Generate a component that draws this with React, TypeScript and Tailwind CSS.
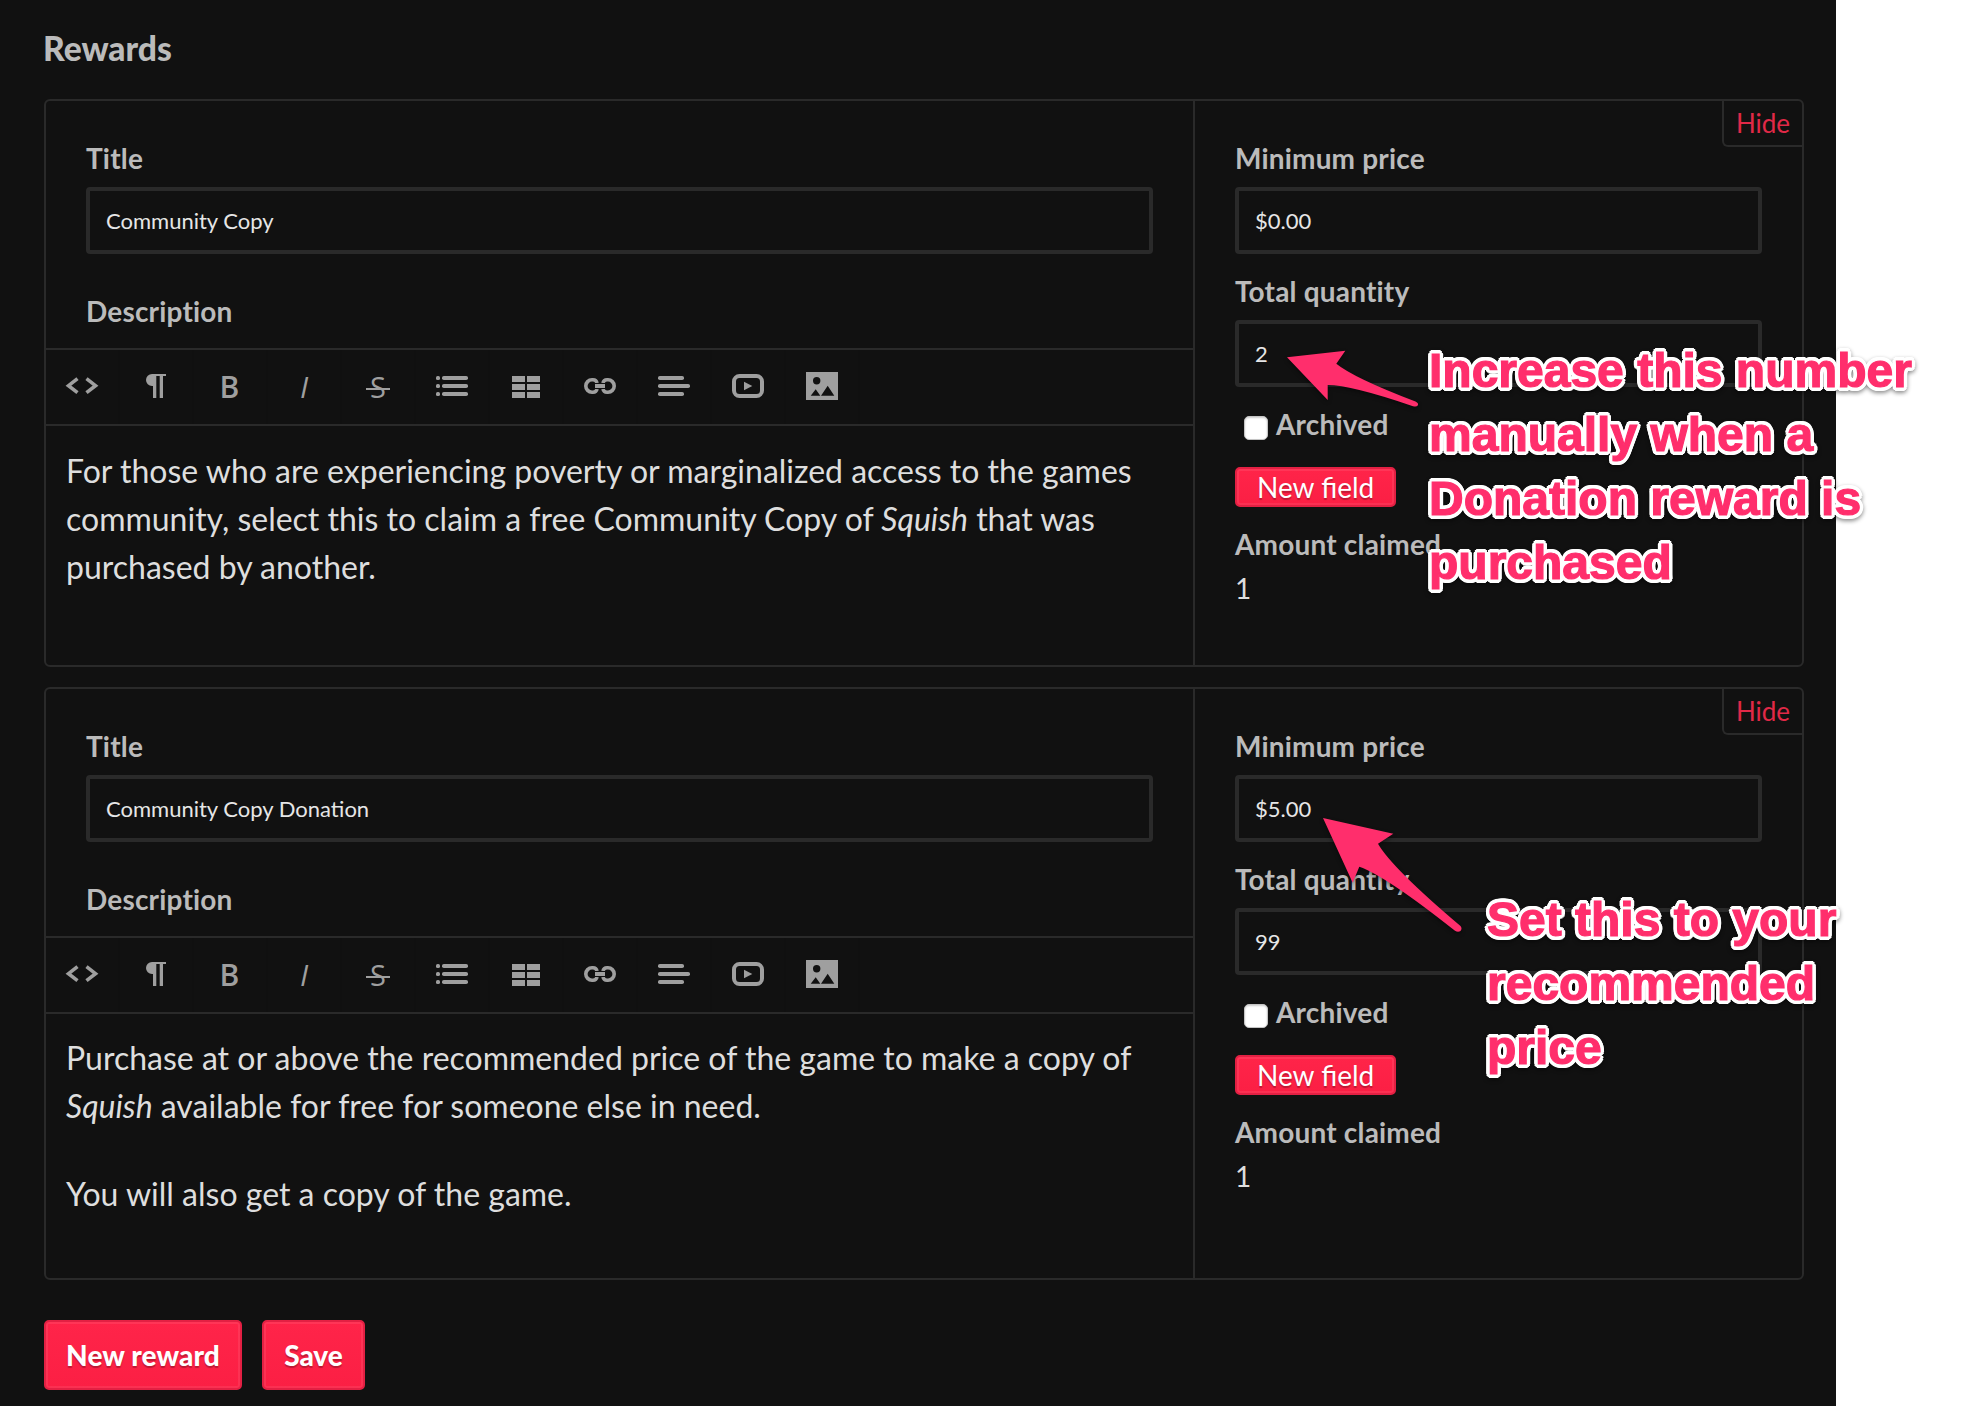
import type { ReactNode } from "react";

type Reward = {
	title: string;
	price: string;
	quantity: string;
	claimed: number;
	description: ReactNode;
};

const rewards: Reward[] = [
	{
		title: "Community Copy",
		price: "$0.00",
		quantity: "2",
		claimed: 1,
		description: (
			<p>
				For those who are experiencing poverty or marginalized access to the games community, select
				this to claim a free Community Copy of <em>Squish</em> that was purchased by another.
			</p>
		),
	},
	{
		title: "Community Copy Donation",
		price: "$5.00",
		quantity: "99",
		claimed: 1,
		description: (
			<>
				<p>
					Purchase at or above the recommended price of the game to make a copy of <em>Squish</em>{" "}
					available for free for someone else in need.
				</p>
				<p>You will also get a copy of the game.</p>
			</>
		),
	},
];

const tools: { name: string; icon: ReactNode }[] = [
	{
		name: "HTML",
		icon: (
			<g fill="none" stroke="currentColor" strokeWidth="3.6">
				<path d="M-4.5 -8.3 L-13.5 -1.3 L-4.5 5.7" />
				<path d="M4.5 -8.3 L13.5 -1.3 L4.5 5.7" />
			</g>
		),
	},
	{
		name: "Paragraph",
		icon: <path d="M10 -13 H-4 a6 6 0 0 0 0 12 H-3 V11 H0.3 V-11 H3.7 V11 H7 V-11 H10 z" />,
	},
	{
		name: "Bold",
		icon: (
			<text x="-0.5" y="11" textAnchor="middle" className="font-['Open_Sans',sans-serif] text-[30px] font-semibold">
				B
			</text>
		),
	},
	{
		name: "Italic",
		icon: (
			<text x="0" y="11" textAnchor="middle" className="font-['Open_Sans',sans-serif] text-[30px] font-medium italic">
				I
			</text>
		),
	},
	{
		name: "Strikethrough",
		icon: (
			<>
				<text x="0" y="11" textAnchor="middle" className="font-['Open_Sans',sans-serif] text-[29px]">
					S
				</text>
				<rect x="-12" y="1" width="24" height="2" />
			</>
		),
	},
	{
		name: "List",
		icon: (
			<>
				{[-11, -3, 5].map((y) => (
					<g key={y}>
						<rect x="-16" y={y} width="4" height="4" rx="1.6" />
						<rect x="-10" y={y} width="26" height="4" rx="1.8" />
					</g>
				))}
			</>
		),
	},
	{
		name: "Table",
		icon: (
			<>
				{[-11, -3, 5].map((y) => (
					<g key={y}>
						<rect x="-14" y={y} width="13" height="6" />
						<rect x="1" y={y} width="13" height="6" />
					</g>
				))}
			</>
		),
	},
	{
		name: "Link",
		icon: (
			<>
				<g fill="none" stroke="currentColor" strokeWidth="3.6">
					<path d="M-3 -4 Q-3.6 -7.2 -7 -7.2 H-8 A6.2 6.2 0 0 0 -8 5.2 H-7 Q-3.6 5.2 -3 2" />
					<path d="M3 -4 Q3.6 -7.2 7 -7.2 H8 A6.2 6.2 0 0 1 8 5.2 H7 Q3.6 5.2 3 2" />
				</g>
				<rect x="-6" y="-4" width="12" height="6" className="fill-[#111]" />
				<rect x="-5" y="-3" width="10" height="4" />
			</>
		),
	},
	{
		name: "Align",
		icon: (
			<>
				<rect x="-16" y="-11" width="26" height="4" rx="1.8" />
				<rect x="-16" y="-3" width="32" height="4" rx="1.8" />
				<rect x="-16" y="5" width="26" height="4" rx="1.8" />
			</>
		),
	},
	{
		name: "Video",
		icon: (
			<>
				<rect x="-14" y="-11" width="28" height="20" rx="5.5" fill="none" stroke="currentColor" strokeWidth="4" />
				<path d="M-4 -5.3 L4.3 -1 L-4 3.3 z" />
			</>
		),
	},
	{
		name: "Image",
		icon: (
			<path
				fillRule="evenodd"
				d="M-16 -15 H16 V13 H-16 z M-5.3 -10 a3.7 3.7 0 1 0 0 7.4 a3.7 3.7 0 1 0 0 -7.4 z M-11.3 8.7 L-6.3 2.3 L-1.7 8.7 z M-1 8.7 L5.7 -1.3 L12.3 8.7 z"
			/>
		),
	},
];

function Toolbar() {
	return (
		<div className="flex h-[78px] border-y-2 border-[#2a2a2a] text-[#9f9f9f]">
			{tools.map(({ name, icon }) => (
				<button
					key={name}
					type="button"
					aria-label={name}
					className="flex w-[74px] items-center justify-center border-r-2 border-[#101010]"
				>
					<svg viewBox="-18 -18 36 36" className="size-9 overflow-visible" fill="currentColor">
						{icon}
					</svg>
				</button>
			))}
		</div>
	);
}

function Label({ children }: { children: ReactNode }) {
	return <div className="text-[28px] leading-10 font-bold tracking-[0.18px] text-[#bbb]">{children}</div>;
}

function Field({ label, value }: { label: string; value: string }) {
	return (
		<label className="block">
			<Label>{label}</Label>
			<input
				type="text"
				defaultValue={value}
				className="mt-[9px] block h-[67px] w-full rounded-[4px] border-4 border-[#2a2a2a] bg-transparent px-4 text-[22px] text-[#e6e6e6] outline-none"
			/>
		</label>
	);
}

const buttonStyle =
	"rounded-[5px] border-2 border-[#e32043] bg-linear-to-b from-[#ff2449] to-[#fb1f44] text-[28px] text-white shadow-[inset_0_0_0_2px_rgba(255,255,255,0.08)] text-shadow-[0_2px_1px_rgba(0,0,0,0.25)]";

function RewardCard({ reward }: { reward: Reward }) {
	return (
		<section className="group relative flex min-h-[568px] rounded-[6px] border-2 border-[#2a2a2a]">
			<div className="w-[1149px] border-r-2 border-[#2a2a2a]">
				<div className="px-10 pt-[37px] pb-[17px]">
					<Field label="Title" value={reward.title} />
					<div className="mt-[37px]">
						<Label>Description</Label>
					</div>
				</div>
				<Toolbar />
				<div className="p-5 text-[32px] leading-[48px] text-[#dedede] group-first:pt-[21px] group-first:pb-0 [&>p]:mb-10">
					{reward.description}
				</div>
			</div>
			<div className="flex flex-1 flex-col items-start px-10 pt-[37px]">
				<div className="flex w-full flex-col gap-[17px]">
					<Field label="Minimum price" value={reward.price} />
					<Field label="Total quantity" value={reward.quantity} />
				</div>
				<label className="mt-[17px] ml-[9px] flex items-center gap-2">
					<input
						type="checkbox"
						className="mt-2 size-6 appearance-none rounded-[5px] border border-[#c4c4c4] bg-white shadow-[inset_0_1px_2px_rgba(0,0,0,0.2)]"
					/>
					<Label>Archived</Label>
				</label>
				<button type="button" className={`${buttonStyle} mt-[23px] h-10 px-5 leading-9`}>
					New field
				</button>
				<div className="mt-[17px]">
					<Label>Amount claimed</Label>
				</div>
				<div className="mt-1 text-[28px] leading-10 text-[#dedede]">{reward.claimed}</div>
			</div>
			<button
				type="button"
				className="absolute top-0 right-0 h-[46px] w-20 rounded-bl-[6px] border-b-2 border-l-2 border-[#2a2a2a] text-[26px] leading-[44px] text-[#e02947]"
			>
				Hide
			</button>
		</section>
	);
}

// White halo is built from offset shadows so the pink stroke can thicken the letters
const noteStyle =
	"absolute text-[48px] leading-[64px] font-bold whitespace-pre font-['Liberation_Sans',Arial,sans-serif] text-[#ff2e6c] [-webkit-text-stroke:1.2px_#ff2e6c] [stroke-linejoin:round] [text-shadow:4px_0_white,3.7px_1.5px_white,2.8px_2.8px_white,1.5px_3.7px_white,0_4px_white,-1.5px_3.7px_white,-2.8px_2.8px_white,-3.7px_1.5px_white,-4px_0_white,-3.7px_-1.5px_white,-2.8px_-2.8px_white,-1.5px_-3.7px_white,0_-4px_white,1.5px_-3.7px_white,2.8px_-2.8px_white,3.7px_-1.5px_white,2px_0_white,0_2px_white,-2px_0_white,0_-2px_white] drop-shadow-[0_2px_2px_rgba(0,0,0,0.45)]";

// Hand-placed callouts that sit over the form
function Annotations() {
	return (
		<div className="pointer-events-none absolute inset-0">
			<svg
				viewBox="0 0 1974 1406"
				className="absolute inset-0 h-[1406px] w-[1974px] fill-[#ff2e6c] drop-shadow-[0_2px_2px_rgba(0,0,0,0.45)]"
			>
				<path d="M1287 357.3 L1345.3 350.7 L1336.3 363.7 Q1354 378 1415.5 401.5 Q1419 403.2 1417.7 405.5 Q1416.5 407.2 1413 406.2 Q1351 385 1327.7 385 L1327.7 400 z" />
				<path d="M1323 818 L1393.3 833.7 L1378 843.7 Q1392 868 1460.5 926 Q1462.5 928.5 1460.5 931 Q1458 932.5 1455 930.8 Q1386 876 1359.3 866.7 L1352.7 882.7 z" />
			</svg>
			<p className={`${noteStyle} top-[339px] left-[1429px]`}>
				{"Increase this number\nmanually when a\nDonation reward is\npurchased"}
			</p>
			<p className={`${noteStyle} top-[887.5px] left-[1487px]`}>{"Set this to your\nrecommended\nprice"}</p>
		</div>
	);
}

export default function App() {
	return (
		<div className="relative h-[1406px] w-[1974px] overflow-hidden bg-white font-['Lato',sans-serif]">
			<main className="h-full w-[1836px] bg-[#111] pt-7 pr-8 pl-11">
				<h2 className="mb-[31px] -ml-px text-[33.6px] leading-10 font-black text-[#bbb]">Rewards</h2>
				<div className="flex flex-col gap-5">
					{rewards.map((reward) => (
						<RewardCard key={reward.title} reward={reward} />
					))}
				</div>
				<div className="mt-10 flex gap-5">
					<button type="button" className={`${buttonStyle} h-[70px] w-[198px] font-black tracking-[0.1px]`}>
						New reward
					</button>
					<button type="button" className={`${buttonStyle} h-[70px] w-[103px] font-black`}>
						Save
					</button>
				</div>
			</main>
			<Annotations />
		</div>
	);
}
